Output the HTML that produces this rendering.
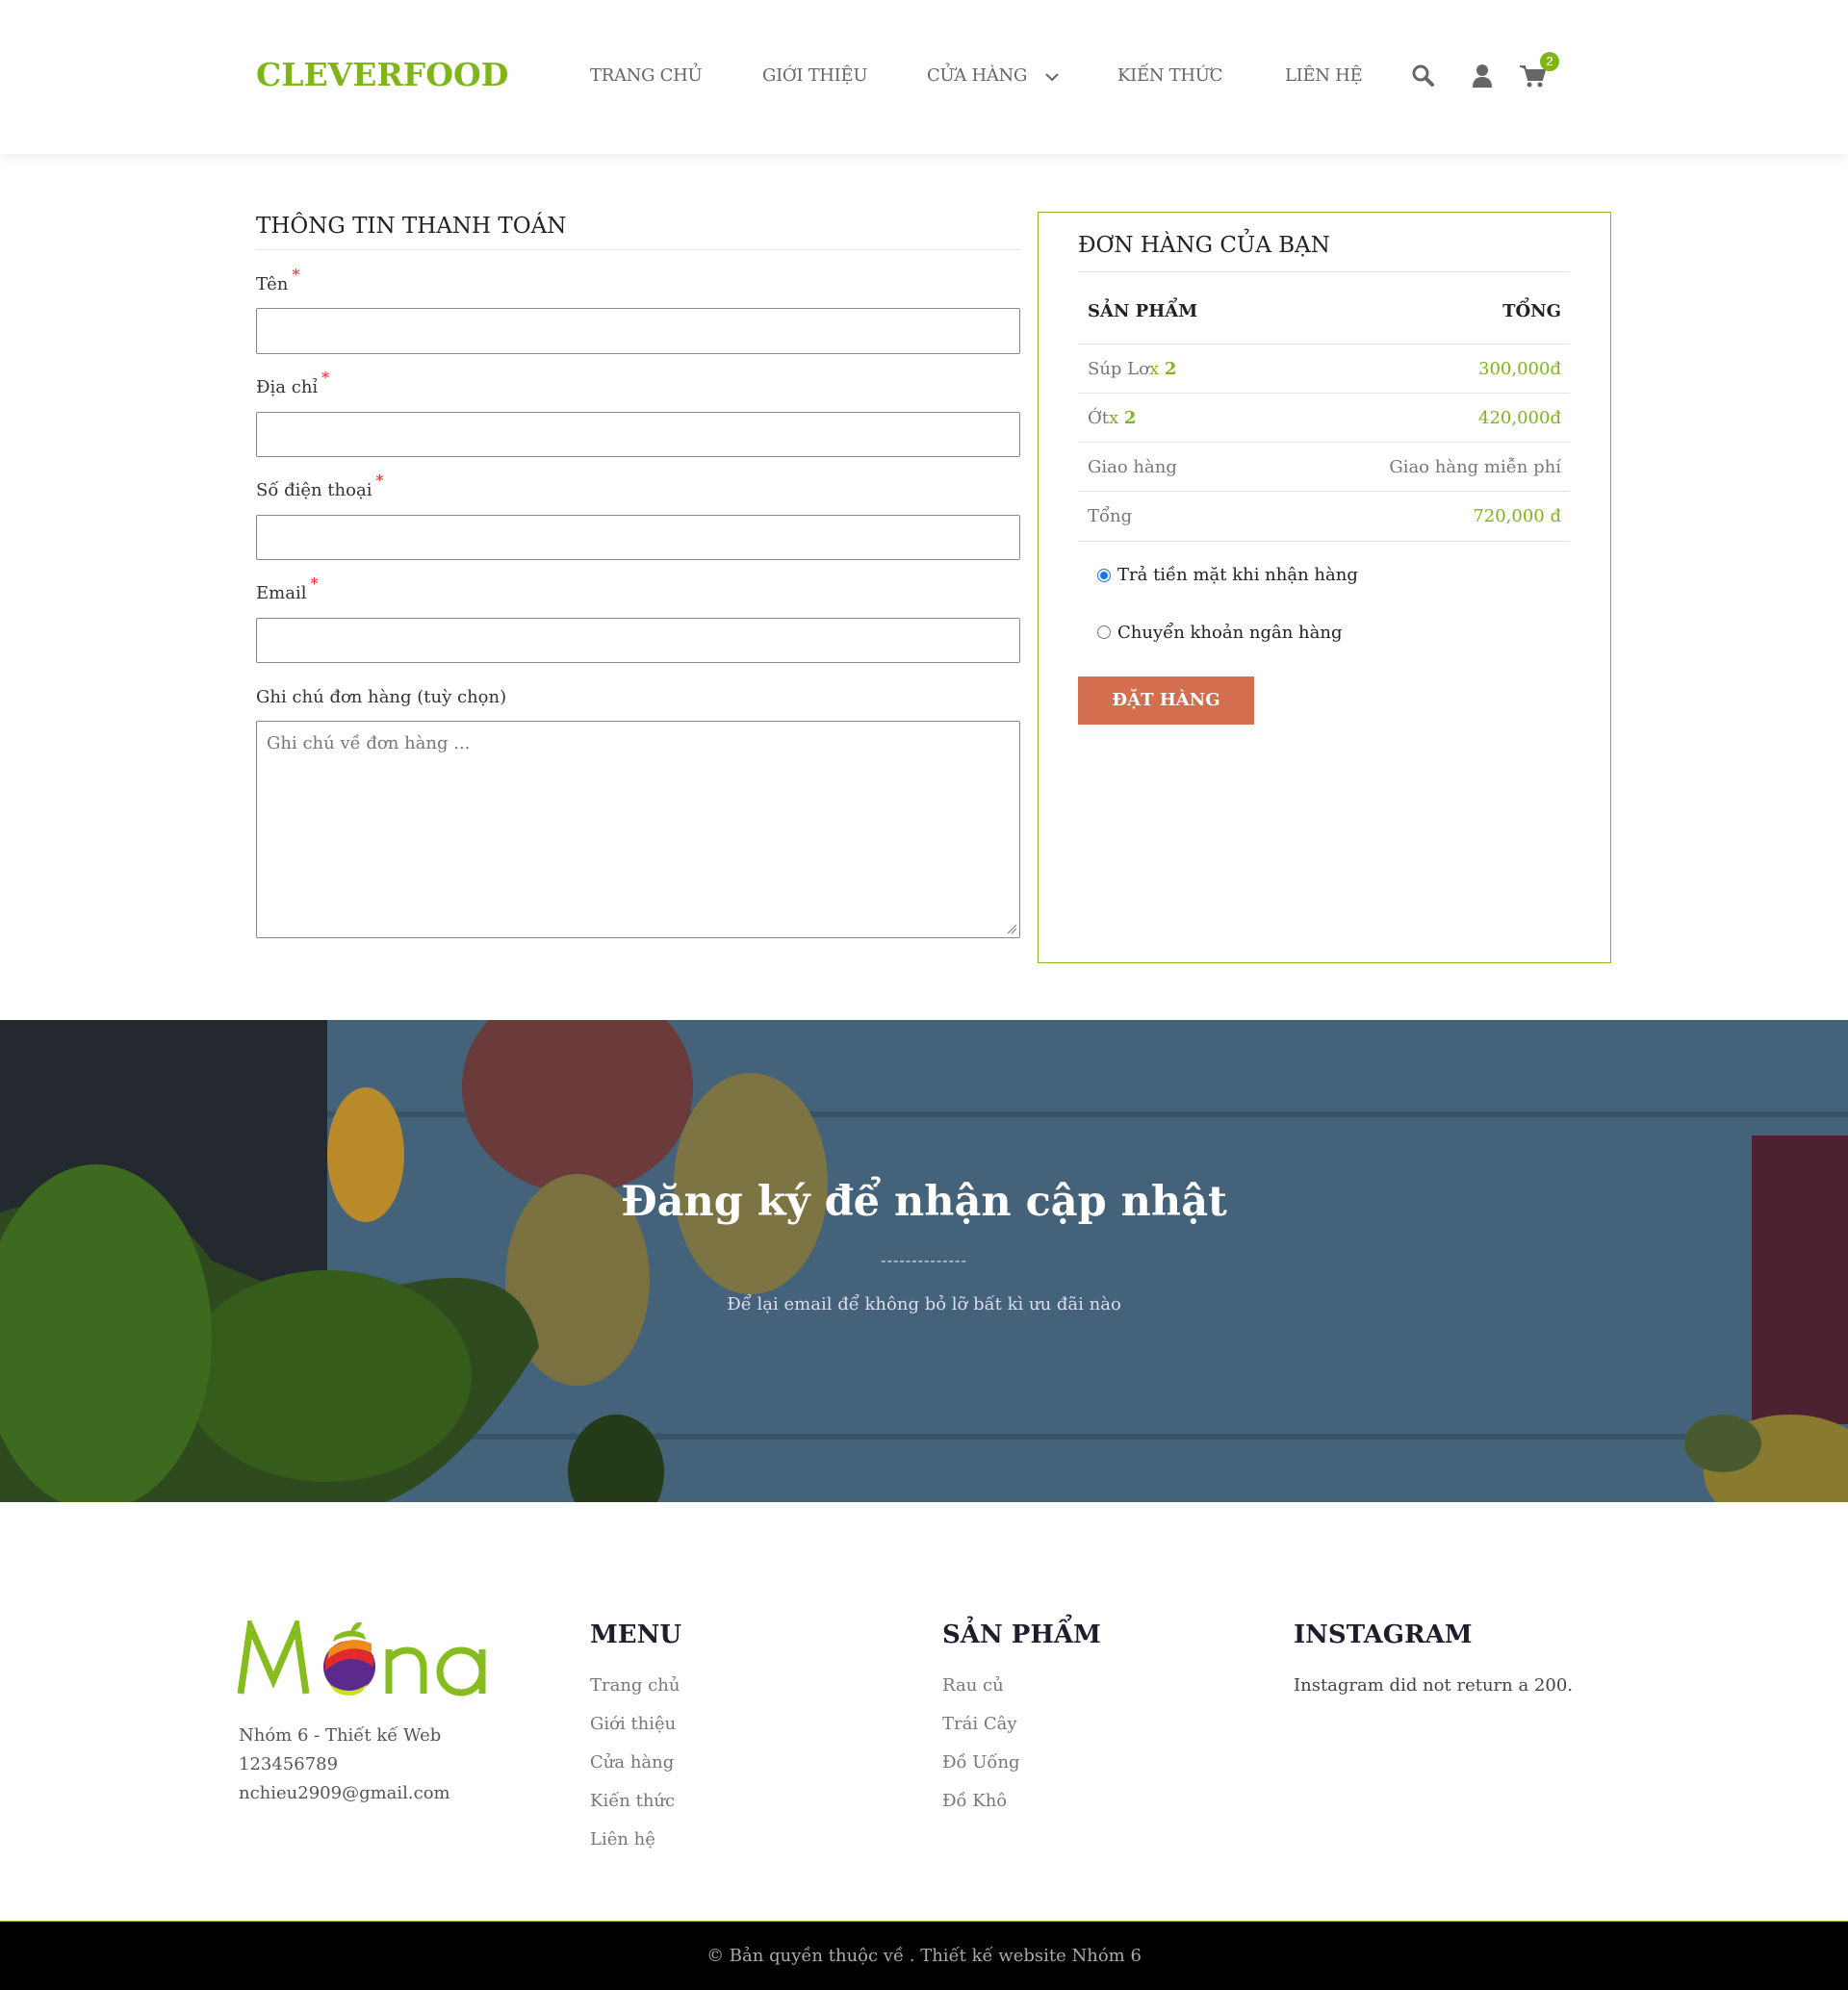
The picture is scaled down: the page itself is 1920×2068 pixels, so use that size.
<!DOCTYPE html>
<html><head><meta charset="utf-8">
<style>
*{box-sizing:border-box;margin:0;padding:0}
body{width:1920px;height:2068px;position:relative;background:#fff;font-family:"Roboto Slab","DejaVu Serif","Liberation Serif",serif;color:#222;overflow:hidden}
.a{position:absolute;white-space:nowrap}
.hdr{position:absolute;left:0;top:0;width:1920px;height:160px;background:#fff;box-shadow:0 4px 14px rgba(0,0,0,.07)}
.logo{left:266px;top:58px;font-size:33px;font-weight:bold;color:#7fb519;letter-spacing:0}
.nav{top:68px;font-size:18px;color:#666;letter-spacing:-0.3px}
.lbl{font-size:18px;color:#333;left:266px}
.lbl b{color:#e22;font-weight:normal;font-size:16px;position:relative;top:-10px;margin-left:4px}
.inp{position:absolute;left:266px;width:794px;border:1px solid #888;border-radius:2px;background:#fff}
.hl{position:absolute;height:1px;background:#e2e2e2}
.row{font-size:18px;color:#777}
.g{color:#7fb519}
.fh{font-size:26px;font-weight:bold;color:#1d1d2b;top:1684px}
.fl{font-size:18px;color:#777}
</style></head><body>
<div class="hdr"></div>
<div class="a logo">CLEVERFOOD</div>
<div class="a nav" style="left:613px">TRANG CHỦ</div>
<div class="a nav" style="left:792px">GIỚI THIỆU</div>
<div class="a nav" style="left:963px">CỬA HÀNG</div>
<svg class="a" style="left:1086px;top:75px" width="14" height="10" viewBox="0 0 14 10"><path d="M1 2l6 6 6-6" fill="none" stroke="#666" stroke-width="2"/></svg>
<div class="a nav" style="left:1161px">KIẾN THỨC</div>
<div class="a nav" style="left:1335px">LIÊN HỆ</div>
<svg class="a" style="left:1466px;top:66px" width="26" height="26" viewBox="0 0 26 26"><circle cx="10" cy="10" r="7" fill="none" stroke="#666" stroke-width="3"/><path d="M15 15l7 7" stroke="#666" stroke-width="4" stroke-linecap="round"/></svg>
<svg class="a" style="left:1529px;top:66px" width="22" height="26" viewBox="0 0 22 26"><circle cx="11" cy="7" r="6" fill="#666"/><path d="M1 25c0-8 4-11 10-11s10 3 10 11z" fill="#666"/></svg>
<svg class="a" style="left:1578px;top:66px" width="28" height="26" viewBox="0 0 28 26"><path d="M1 3h5l4 14h14l3-10H8" fill="#666" stroke="#666" stroke-width="2"/><circle cx="11" cy="22" r="2.5" fill="#666"/><circle cx="22" cy="22" r="2.5" fill="#666"/></svg>
<div class="a" style="left:1600px;top:54px;width:20px;height:20px;border-radius:50%;background:#7fb519;color:#fff;font-size:13px;text-align:center;line-height:20px;font-family:'Liberation Sans',sans-serif">2</div>

<div class="a" style="left:266px;top:222px;font-size:23px;color:#222">THÔNG TIN THANH TOÁN</div>
<div class="hl" style="left:266px;top:259px;width:794px"></div>
<div class="a lbl" style="top:285px">Tên<b>*</b></div>
<div class="inp" style="top:320px;height:48px"></div>
<div class="a lbl" style="top:392px">Địa chỉ<b>*</b></div>
<div class="inp" style="top:428px;height:47px"></div>
<div class="a lbl" style="top:499px">Số điện thoại<b>*</b></div>
<div class="inp" style="top:535px;height:47px"></div>
<div class="a lbl" style="top:606px">Email<b>*</b></div>
<div class="inp" style="top:642px;height:47px"></div>
<div class="a lbl" style="top:714px">Ghi chú đơn hàng (tuỳ chọn)</div>
<div class="inp" style="top:749px;height:226px"></div>
<div class="a" style="left:277px;top:762px;font-size:18px;color:#777">Ghi chú về đơn hàng ...</div>
<svg class="a" style="left:1045px;top:959px" width="12" height="12"><path d="M2 11L11 2M6 11l5-5" stroke="#777"/></svg>

<div class="a" style="left:1078px;top:220px;width:596px;height:781px;border:1.5px solid #86bc1e"></div>
<div class="a" style="left:1120px;top:242px;font-size:23px;color:#222">ĐƠN HÀNG CỦA BẠN</div>
<div class="hl" style="left:1120px;top:282px;width:511px"></div>
<div class="a" style="left:1130px;top:313px;font-size:18px;font-weight:bold;color:#222">SẢN PHẨM</div>
<div class="a" style="right:298px;top:313px;font-size:18px;font-weight:bold;color:#222">TỔNG</div>
<div class="hl" style="left:1120px;top:357px;width:511px"></div>
<div class="a row" style="left:1130px;top:373px">Súp Lơ<span class="g">x <b>2</b></span></div>
<div class="a row g" style="right:298px;top:373px">300,000đ</div>
<div class="hl" style="left:1120px;top:408px;width:511px"></div>
<div class="a row" style="left:1130px;top:424px">Ớt<span class="g">x <b>2</b></span></div>
<div class="a row g" style="right:298px;top:424px">420,000đ</div>
<div class="hl" style="left:1120px;top:459px;width:511px"></div>
<div class="a row" style="left:1130px;top:475px">Giao hàng</div>
<div class="a row" style="right:298px;top:475px">Giao hàng miễn phí</div>
<div class="hl" style="left:1120px;top:510px;width:511px"></div>
<div class="a row" style="left:1130px;top:526px">Tổng</div>
<div class="a row g" style="right:298px;top:526px">720,000 đ</div>
<div class="hl" style="left:1120px;top:562px;width:511px"></div>
<div class="a" style="left:1140px;top:591px;width:14px;height:14px;border-radius:50%;border:1px solid #1a73e8;background:radial-gradient(circle,#1a73e8 3.5px,#fff 4.5px)"></div>
<div class="a" style="left:1161px;top:587px;font-size:18px;color:#222">Trả tiền mặt khi nhận hàng</div>
<div class="a" style="left:1140px;top:650px;width:14px;height:14px;border-radius:50%;border:1px solid #777;background:#fff"></div>
<div class="a" style="left:1161px;top:647px;font-size:18px;color:#222">Chuyển khoản ngân hàng</div>
<div class="a" style="left:1120px;top:703px;width:183px;height:50px;background:#d36f4e;color:#fff;font-size:18px;font-weight:bold;text-align:center;line-height:50px">ĐẶT HÀNG</div>

<svg class="a" style="left:0;top:1060px" width="1920" height="501" viewBox="0 0 1920 501">
<rect width="1920" height="501" fill="#44637a"/>
<rect x="0" y="95" width="1920" height="6" fill="#385367"/>
<rect x="0" y="430" width="1920" height="6" fill="#385367"/>
<rect x="0" y="0" width="340" height="330" fill="#23292f"/>
<ellipse cx="600" cy="70" rx="120" ry="110" fill="#6b3a3a"/>
<ellipse cx="780" cy="170" rx="80" ry="115" fill="#7c7443"/>
<ellipse cx="600" cy="270" rx="75" ry="110" fill="#7a7040"/>
<ellipse cx="380" cy="140" rx="40" ry="70" fill="#b98a2a"/>
<path d="M0 200 Q150 150 220 250 L340 300 Q540 220 560 340 Q480 470 400 501 L0 501z" fill="#2e4a1e"/>
<ellipse cx="340" cy="370" rx="150" ry="110" fill="#365c1c"/>
<ellipse cx="100" cy="330" rx="120" ry="180" fill="#3d6a1f"/>
<ellipse cx="640" cy="470" rx="50" ry="60" fill="#243a18"/>
<rect x="1820" y="120" width="100" height="300" fill="#4d2230"/>
<ellipse cx="1860" cy="470" rx="90" ry="60" fill="#8a7a30"/>
<ellipse cx="1790" cy="440" rx="40" ry="30" fill="#4a5a30"/>
</svg>
<div class="a" style="left:0;width:1920px;top:1224px;text-align:center;font-size:43px;font-weight:bold;color:#fff">Đăng ký để nhận cập nhật</div>
<div class="a" style="left:0;width:1920px;top:1300px;text-align:center;font-size:16px;color:#ddd;letter-spacing:1px">--------------</div>
<div class="a" style="left:0;width:1920px;top:1345px;text-align:center;font-size:18px;color:#dde">Để lại email để không bỏ lỡ bất kì ưu đãi nào</div>

<svg class="a" style="left:246px;top:1684px" width="270" height="80" viewBox="0 0 270 80">
<path d="M4 76L14 6 38 62 62 6 72 76" fill="none" stroke="#86bc1e" stroke-width="7"/>
<circle cx="117" cy="48" r="27" fill="#5b2a8c"/>
<path d="M92 40Q117 20 142 36L142 48Q117 30 92 52z" fill="#e22a2a"/>
<path d="M96 30Q117 14 140 24L140 34Q117 22 94 40z" fill="#f08a1c"/>
<path d="M100 22Q117 12 134 20L132 14Q117 6 102 16z" fill="#86bc1e"/>
<path d="M96 66Q117 80 136 66L130 74Q117 82 102 74z" fill="#c8e020"/>
<path d="M118 12Q122 0 130 2Q128 10 118 12z" fill="#86bc1e"/>
<path d="M158 76V30M158 40Q170 28 184 32Q194 36 194 50V76" fill="none" stroke="#86bc1e" stroke-width="7"/>
<circle cx="233" cy="53" r="22" fill="none" stroke="#86bc1e" stroke-width="7"/>
<path d="M255 30V76" stroke="#86bc1e" stroke-width="7"/>
</svg>
<div class="a fl" style="left:248px;top:1793px;color:#555">Nhóm 6 - Thiết kế Web</div>
<div class="a fl" style="left:248px;top:1823px;color:#555">123456789</div>
<div class="a fl" style="left:248px;top:1853px;color:#555">nchieu2909@gmail.com</div>

<div class="a fh" style="left:613px">MENU</div>
<div class="a fl" style="left:613px;top:1741px">Trang chủ</div>
<div class="a fl" style="left:613px;top:1781px">Giới thiệu</div>
<div class="a fl" style="left:613px;top:1821px">Cửa hàng</div>
<div class="a fl" style="left:613px;top:1861px">Kiến thức</div>
<div class="a fl" style="left:613px;top:1901px">Liên hệ</div>
<div class="a fh" style="left:979px">SẢN PHẨM</div>
<div class="a fl" style="left:979px;top:1741px">Rau củ</div>
<div class="a fl" style="left:979px;top:1781px">Trái Cây</div>
<div class="a fl" style="left:979px;top:1821px">Đồ Uống</div>
<div class="a fl" style="left:979px;top:1861px">Đồ Khô</div>
<div class="a fh" style="left:1344px">INSTAGRAM</div>
<div class="a fl" style="left:1344px;top:1741px;color:#444">Instagram did not return a 200.</div>

<div class="a" style="left:0;top:1996px;width:1920px;height:72px;background:#000;border-top:1.5px solid #7fb519"></div>
<div class="a" style="left:0;width:1920px;top:2022px;text-align:center;font-size:18px;color:#aaa">© Bản quyền thuộc về . Thiết kế website Nhóm 6</div>
</body></html>
